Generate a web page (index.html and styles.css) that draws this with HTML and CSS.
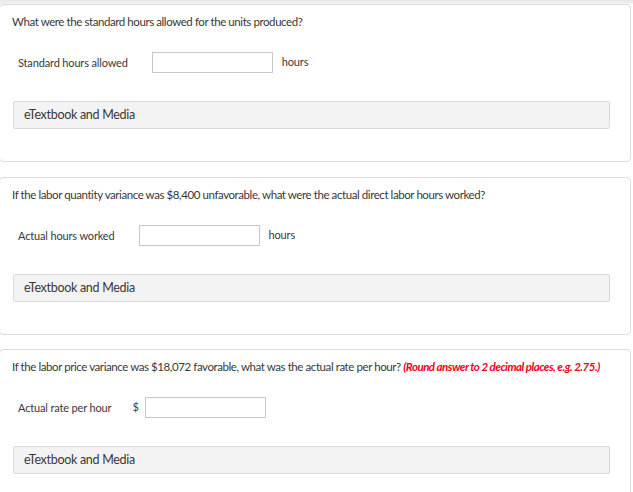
FILE: index.html
```html
<!DOCTYPE html>
<html>
<head>
<meta charset="utf-8">
<link rel="stylesheet" href="styles.css">
</head>
<body>
<div class="topband"></div>
<div class="card">
  <p class="question">What were the standard hours allowed for the units produced?</p>
  <div class="answer-row">
    <span class="label">Standard hours allowed</span>
    <span class="input"></span>
    <span class="unit">hours</span>
  </div>
  <div class="media">eTextbook and Media</div>
</div>
<div class="card">
  <p class="question">If the labor quantity variance was $8,400 unfavorable, what were the actual direct labor hours worked?</p>
  <div class="answer-row">
    <span class="label">Actual hours worked</span>
    <span class="input"></span>
    <span class="unit">hours</span>
  </div>
  <div class="media">eTextbook and Media</div>
</div>
<div class="card">
  <p class="question">If the labor price variance was $18,072 favorable, what was the actual rate per hour? <em class="hint">(Round answer to 2 decimal places, e.g. 2.75.)</em></p>
  <div class="answer-row">
    <span class="label label-short">Actual rate per hour</span>
    <span class="currency">$</span>
    <span class="input"></span>
  </div>
  <div class="media">eTextbook and Media</div>
</div>
</body>
</html>
```

FILE: styles.css
```css
html, body {
  margin: 0;
  padding: 0;
  background: #fff;
  font-family: Lato, "Open Sans", sans-serif;
  color: #383838;
  overflow: hidden;
}
.topband {
  height: 4px;
  background: linear-gradient(#e6e6e6, #f4f4f4);
}
.card {
  margin: 0 2px 14.5px -1px;
  border: 1px solid #dcdcdc;
  border-radius: 4px;
  padding: 9px 20px 32px 12px;
  background: #fff;
}
.question {
  margin: 0;
  font-size: 11.5px;
  line-height: 16px;
  letter-spacing: -0.42px;
  white-space: nowrap;
}
.hint {
  color: #f0001c;
  font-weight: bold;
  font-style: italic;
  letter-spacing: -0.5px;
}
.answer-row {
  display: flex;
  align-items: center;
  margin: 22px 0 28px 6px;
  height: 21px;
  font-size: 11px;
  letter-spacing: -0.15px;
}
.label {
  margin-right: 24px;
}
.label-short {
  margin-right: 21px;
}
.input {
  width: 119px;
  height: 19px;
  border: 1px solid #c8c8c8;
  background: #fff;
}
.unit {
  margin-left: 9px;
  margin-top: -2px;
}
.currency {
  margin-right: 6px;
  margin-top: -2px;
}
.media {
  margin-left: 1px;
  height: 26px;
  border: 1px solid #dadada;
  border-radius: 2px;
  background: #f3f3f3;
  padding-left: 10px;
  font-size: 12.5px;
  line-height: 26px;
  letter-spacing: -0.3px;
}
```
